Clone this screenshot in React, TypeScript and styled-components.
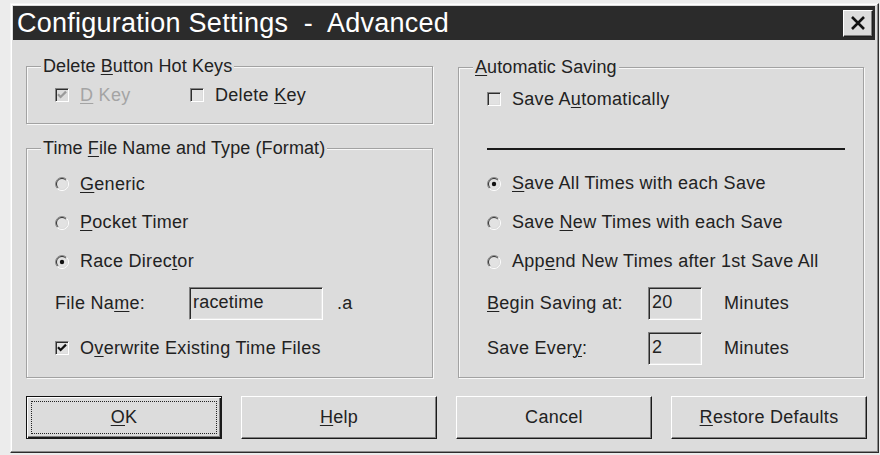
import React from "react";
import styled, { createGlobalStyle } from "styled-components";

const FACE = "#dcdcdc";
const INK = "#222222";

const Global = createGlobalStyle`
  * { box-sizing: border-box; }
  body {
    margin: 0;
    background: #ececec;
    font-family: "Liberation Sans", Arial, sans-serif;
    color: ${INK};
  }
`;

const Window = styled.div`
  margin: 3px 0 0 10px;
  width: 869px;
  height: 450px;
  background: ${FACE};
  border-top: 1px solid #f4f4f4;
  border-left: 1px solid #f4f4f4;
  border-right: 1px solid #2c2c2c;
  border-bottom: 1px solid #2c2c2c;
  box-shadow: inset -1px -1px 0 #8a8a8a, inset 1px 1px 0 #ffffff;
  padding: 2px 3px 0 2px;
  display: flex;
  flex-direction: column;
`;

const TitleBar = styled.div`
  height: 34px;
  background: #2b2b2b;
  display: flex;
  align-items: center;
  justify-content: space-between;
  padding: 0 2px 0 4px;
`;

const TitleText = styled.span`
  color: #ffffff;
  font-size: 27px;
  letter-spacing: 0.25px;
  white-space: pre;
  line-height: 34px;
`;

const CloseButton = styled.div`
  width: 30px;
  height: 27px;
  background: ${FACE};
  border-top: 1px solid #ffffff;
  border-left: 1px solid #ffffff;
  border-right: 1px solid #202020;
  border-bottom: 1px solid #202020;
  box-shadow: inset -1px -1px 0 #808080;
  display: flex;
  align-items: center;
  justify-content: center;
`;

const Body = styled.div`
  padding: 26px 8px 0 13px;
  display: flex;
  flex-direction: column;
`;

const Columns = styled.div`
  display: grid;
  grid-template-columns: 407px 406px;
  column-gap: 25px;
  align-items: start;
`;

const Stack = styled.div`
  display: flex;
  flex-direction: column;
  gap: 24px;
`;

const Group = styled.div<{ $h: number; $top?: number; $pad?: string }>`
  position: relative;
  height: ${(p) => p.$h}px;
  margin-top: ${(p) => p.$top ?? 0}px;
  border: 1px solid #a2a2a2;
  box-shadow: inset 1px 1px 0 #f8f8f8, 1px 1px 0 #f8f8f8;
  padding: ${(p) => p.$pad ?? "0 0 0 28px"};
  display: flex;
  flex-direction: column;
`;

const Legend = styled.div`
  position: absolute;
  top: -11px;
  left: 14px;
  padding: 0 2px;
  background: ${FACE};
  font-size: 18px;
  letter-spacing: 0.1px;
  line-height: 20px;
  white-space: nowrap;
`;

const Row = styled.div<{ $h: number }>`
  height: ${(p) => p.$h}px;
  display: flex;
  align-items: center;
  font-size: 18px;
  letter-spacing: 0.3px;
  white-space: nowrap;
`;

const Option = styled.label<{ $disabled?: boolean; $w?: number }>`
  display: flex;
  align-items: center;
  gap: 11px;
  width: ${(p) => (p.$w ? `${p.$w}px` : "auto")};
  color: ${(p) => (p.$disabled ? "#a4a4a4" : INK)};
`;

const Key = styled.u`
  text-decoration: underline;
  text-underline-offset: 2px;
  text-decoration-thickness: 1px;
`;

const Box = styled.span<{ $disabled?: boolean }>`
  width: 14px;
  height: 14px;
  flex: none;
  background: ${(p) => (p.$disabled ? FACE : "#e2e2e2")};
  border-top: 1px solid #858585;
  border-left: 1px solid #858585;
  border-right: 1px solid #ffffff;
  border-bottom: 1px solid #ffffff;
  box-shadow: inset 1px 1px 0 #2e2e2e, inset -1px -1px 0 ${FACE};
  display: flex;
  align-items: center;
  justify-content: center;
`;

const Label = styled.span<{ $w: number }>`
  width: ${(p) => p.$w}px;
  flex: none;
`;

const Field = styled.div<{ $w: number }>`
  width: ${(p) => p.$w}px;
  height: 33px;
  flex: none;
  background: ${FACE};
  border-top: 1px solid #808080;
  border-left: 1px solid #808080;
  border-right: 1px solid #ffffff;
  border-bottom: 1px solid #ffffff;
  box-shadow: inset 1px 1px 0 #2a2a2a, inset -1px -1px 0 #e6e6e6;
  padding: 2px 0 0 3px;
  font-size: 18px;
  letter-spacing: 0.2px;
  line-height: 24px;
`;

const Unit = styled.span<{ $gap: number }>`
  margin-left: ${(p) => p.$gap}px;
`;

const Rule = styled.div`
  height: 2px;
  width: 358px;
  background: #1a1a1a;
  margin: 30px 0 14px;
`;

const ButtonRow = styled.div`
  margin-top: 18px;
  display: grid;
  grid-template-columns: repeat(4, 196px);
  column-gap: 19px;
`;

const Button = styled.div<{ $default?: boolean }>`
  position: relative;
  height: 43px;
  background: ${FACE};
  border-top: 1px solid ${(p) => (p.$default ? "#111" : "#ffffff")};
  border-left: 1px solid ${(p) => (p.$default ? "#111" : "#ffffff")};
  border-right: 1px solid #1a1a1a;
  border-bottom: 1px solid #1a1a1a;
  box-shadow: ${(p) =>
    p.$default
      ? "inset 1px 1px 0 #ffffff, inset -1px -1px 0 #1a1a1a, inset -2px -2px 0 #808080"
      : "inset -1px -1px 0 #808080"};
  display: flex;
  align-items: center;
  justify-content: center;
  font-size: 18px;
  letter-spacing: 0.3px;
`;

const Focus = styled.span`
  position: absolute;
  inset: 4px 4px 4px 4px;
  border: 1px dotted #222;
  pointer-events: none;
`;

const Check = ({ color = "#111" }: { color?: string }) => (
  <svg width="12" height="12" viewBox="0 0 12 12">
    <path d="M2 5.2 L4.6 8 L10 2.6" fill="none" stroke={color} strokeWidth="2.2" />
  </svg>
);

const Radio = ({ on }: { on?: boolean }) => (
  <svg width="14" height="14" viewBox="0 0 14 14" style={{ flex: "none" }}>
    <circle cx="7" cy="7" r="6" fill="#e2e2e2" />
    <path d="M2.4 11.6 A6.5 6.5 0 0 1 11.6 2.4" fill="none" stroke="#8a8a8a" />
    <path d="M3.1 10.9 A5.5 5.5 0 0 1 10.9 3.1" fill="none" stroke="#333" />
    <path d="M11.6 2.4 A6.5 6.5 0 0 1 2.4 11.6" fill="none" stroke="#ffffff" />
    <path d="M10.9 3.1 A5.5 5.5 0 0 1 3.1 10.9" fill="none" stroke={FACE} />
    {on && <circle cx="7" cy="7" r="2.2" fill="#111" />}
  </svg>
);

export default function App() {
  return (
    <>
      <Global />
      <Window>
        <TitleBar>
          <TitleText>Configuration Settings  -  Advanced</TitleText>
          <CloseButton>
            <svg width="16" height="14" viewBox="0 0 16 14">
              <path d="M2 1 L14 13 M14 1 L2 13" stroke="#111" strokeWidth="2.6" />
            </svg>
          </CloseButton>
        </TitleBar>

        <Body>
          <Columns>
            <Stack>
              <Group $h={58}>
                <Legend>
                  Delete <Key>B</Key>utton Hot Keys
                </Legend>
                <Row $h={56}>
                  <Option $disabled $w={135}>
                    <Box $disabled>
                      <Check color="#9a9a9a" />
                    </Box>
                    <span>
                      <Key>D</Key> Key
                    </span>
                  </Option>
                  <Option>
                    <Box />
                    <span>
                      Delete <Key>K</Key>ey
                    </span>
                  </Option>
                </Row>
              </Group>

              <Group $h={230} $pad="16px 0 0 28px">
                <Legend>
                  Time <Key>F</Key>ile Name and Type (Format)
                </Legend>
                <Row $h={38}>
                  <Option>
                    <Radio />
                    <span>
                      <Key>G</Key>eneric
                    </span>
                  </Option>
                </Row>
                <Row $h={39}>
                  <Option>
                    <Radio />
                    <span>
                      <Key>P</Key>ocket Timer
                    </span>
                  </Option>
                </Row>
                <Row $h={39}>
                  <Option>
                    <Radio on />
                    <span>
                      Race Direc<Key>t</Key>or
                    </span>
                  </Option>
                </Row>
                <Row $h={44}>
                  <Label $w={134}>
                    File Na<Key>m</Key>e:
                  </Label>
                  <Field $w={134}>racetime</Field>
                  <Unit $gap={14}>.a</Unit>
                </Row>
                <Row $h={46}>
                  <Option>
                    <Box>
                      <Check />
                    </Box>
                    <span>
                      O<Key>v</Key>erwrite Existing Time Files
                    </span>
                  </Option>
                </Row>
              </Group>
            </Stack>

            <Group $h={311} $top={1} $pad="12px 0 0 28px">
              <Legend>
                <Key>A</Key>utomatic Saving
              </Legend>
              <Row $h={38}>
                <Option>
                  <Box />
                  <span>
                    Save A<Key>u</Key>tomatically
                  </span>
                </Option>
              </Row>
              <Rule />
              <Row $h={39}>
                <Option>
                  <Radio on />
                  <span>
                    <Key>S</Key>ave All Times with each Save
                  </span>
                </Option>
              </Row>
              <Row $h={39}>
                <Option>
                  <Radio />
                  <span>
                    Save <Key>N</Key>ew Times with each Save
                  </span>
                </Option>
              </Row>
              <Row $h={39}>
                <Option>
                  <Radio />
                  <span>
                    App<Key>e</Key>nd New Times after 1st Save All
                  </span>
                </Option>
              </Row>
              <Row $h={44}>
                <Label $w={161}>
                  <Key>B</Key>egin Saving at:
                </Label>
                <Field $w={54}>20</Field>
                <Unit $gap={22}>Minutes</Unit>
              </Row>
              <Row $h={46}>
                <Label $w={161}>
                  Save Ever<Key>y</Key>:
                </Label>
                <Field $w={54}>2</Field>
                <Unit $gap={22}>Minutes</Unit>
              </Row>
            </Group>
          </Columns>

          <ButtonRow>
            <Button $default>
              <Focus />
              <span>
                <Key>O</Key>K
              </span>
            </Button>
            <Button>
              <span>
                <Key>H</Key>elp
              </span>
            </Button>
            <Button>Cancel</Button>
            <Button>
              <span>
                <Key>R</Key>estore Defaults
              </span>
            </Button>
          </ButtonRow>
        </Body>
      </Window>
    </>
  );
}
